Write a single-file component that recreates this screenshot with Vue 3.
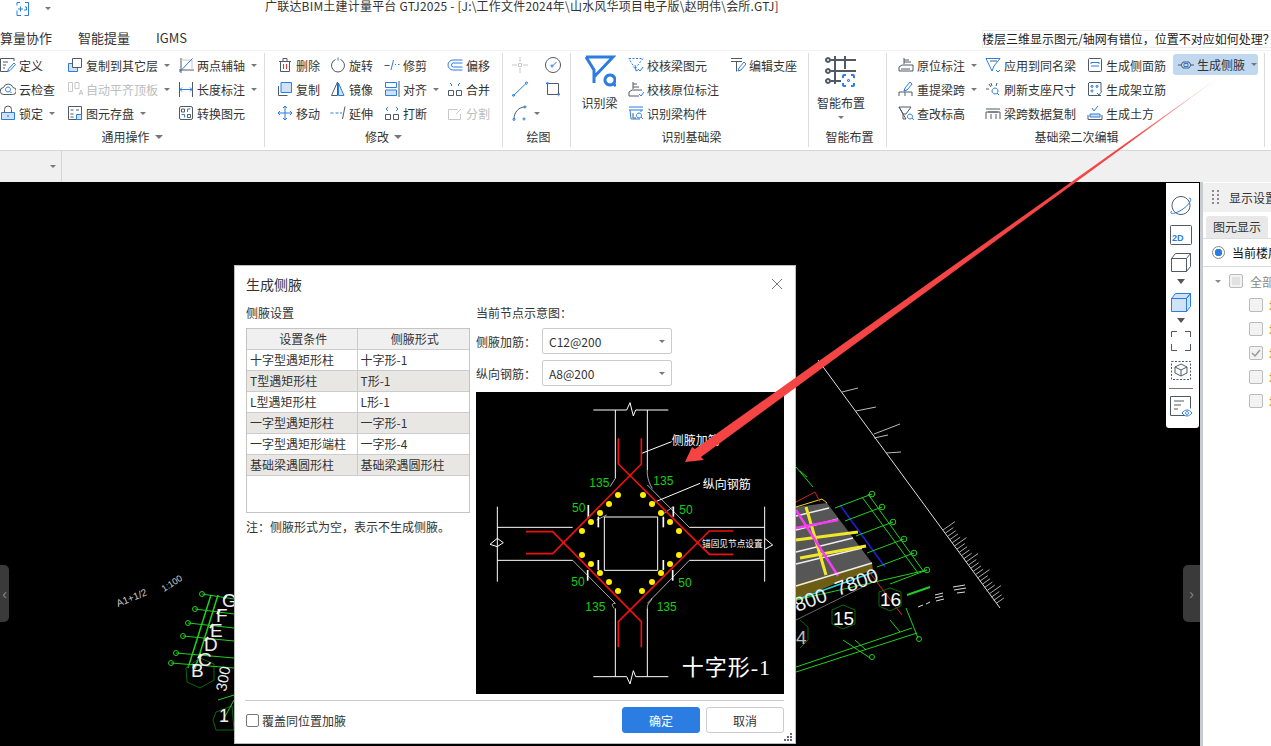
<script setup>
import { h } from 'vue'

// stroke/fill per short key used in the icon table
const STYLES = {
  k: { stroke: '#505a66', fill: 'none' },
  b: { stroke: '#2b7de1', fill: 'none' },
  l: { stroke: '#2b7de1', fill: '#cfe2f8' },
  w: { stroke: '#505a66', fill: '#fff' },
  g: { stroke: '#c8c8c8', fill: 'none' },
  r: { stroke: '#e03030', fill: 'none' },
  B: { stroke: '#2b7de1', fill: 'none', 'stroke-width': 3 },
  E: { stroke: '#2b7de1', fill: 'none', 'stroke-width': 2 },
  D: { stroke: '#505a66', fill: 'none', 'stroke-width': 2 },
  d: { stroke: '#505a66', fill: 'none', 'stroke-dasharray': '2 1.5' },
  e: { stroke: '#2b7de1', fill: 'none', 'stroke-dasharray': '2 1.5' },
}

const ICONS = {
  define: [['k', 'M14 4V1.500H.5v13H8'], ['k', 'M3 5h5M3 8h3M3 11h2'], ['b', 'M14 6 8.500 12l-1 2.500 2.500-1L15.500 7.500z']],
  cloud: [['k', 'M4 13.500a3.500 3.500 0 0 1-.5-7 5 5 0 0 1 9.500 0 3.500 3.500 0 0 1-.5 7z'], ['b', 'M8 6a2.500 2.500 0 1 0 .01 0M10 10.500l1.500 1.500']],
  lock: [['l', 'M1.500 7.500h13v7h-13z'], ['k', 'M4.500 7.500V4.500a3.500 3.500 0 0 1 7 0v3M8 10v2']],
  copyLayer: [['l', 'M1.500 6.500h9v8h-9z'], ['w', 'M5.500 1.500h9v9h-9z']],
  alignTop: [['g', 'M1.500 1.500h4v9h-4zM8 1.500h4v6H8zM12 14l2-5 2 5M13 12.500h2']],
  save: [['k', 'M1.500 1.500h13v13h-13zM3.500 5h3M9 5h3M3.500 9h3M3.500 12h3'], ['l', 'M9.500 9.500h5v5h-5z']],
  twoPoint: [['k', 'M3 1v15M1 13h15'], ['g', 'M3 3h11v10'], ['b', 'M1.500 15 14.500 1.500']],
  length: [['k', 'M1.500 1v15M14.500 1v15'], ['b', 'M2 8.500h12M4 6.500l-2 2 2 2M12 6.500l2 2-2 2']],
  convert: [['k', 'M1.500 3a1.500 1.500 0 0 1 1.500-1.500h10a1.500 1.500 0 0 1 1.500 1.500v10a1.500 1.500 0 0 1-1.500 1.500H3a1.500 1.500 0 0 1-1.500-1.500zM3.500 4h3v3h-3zM9.500 9.500h3v3h-3z'], ['b', 'M9.500 7V4h3M3.500 9.500h3v3']],
  trash: [['k', 'M3.500 4.500v10h9v-10zM2 4.500h12M6 4.500V1.500h4v3'], ['r', 'M6.500 7v5M9.500 7v5']],
  rotate: [['k', 'M5.500 2.500a6.500 6.500 0 1 0 5 0'], ['b', 'M8 .5v3']],
  trim: [['k', 'M.5 8.500h5'], ['b', 'M11 7.500h1M14 7.500h1.500M9.500 3 7 13']],
  offset: [['b', 'M15.500 3H6a5 5 0 0 0 0 10h9.500M15.500 6H6.500a2 2 0 0 0 0 4h9']],
  copy: [['k', 'M1.500 5v9.500h9'], ['l', 'M4 1.500h10.500v10H4z']],
  mirror: [['k', 'M7.500 1 1.500 14.500h6z'], ['l', 'M8.500 2l5.500 12.500H8.500z']],
  align: [['b', 'M1.500 1.500h11v5h-11z'], ['l', 'M1.500 9h11v5.500h-11z'], ['k', 'M15 0v16']],
  merge: [['k', 'M1.500 9.500h5v5h-5zM9.500 9.500h5v5h-5z'], ['b', 'M3 2l2 2-1 1M13 2l-2 2 1 1']],
  move: [['b', 'M8 1v14M1 8h14M6 3l2-2 2 2M6 13l2 2 2-2M3 6 1 8l2 2M13 6l2 2-2 2']],
  extend: [['b', 'M.5 8h3M5.500 8h3M10 8h2'], ['k', 'M15 1.500 12.500 14']],
  breakIcon: [['k', 'M1.500 9.500h5v5h-5zM9.500 9.500h5v5h-5z'], ['b', 'M4 2 2 4l2 2M12 2l2 2-2 2']],
  split: [['g', 'M1.500 4.500h9M1.500 4.500v10h12V9M9 9l5-5']],
  point: [['g', 'M0 8h5M11 8h5M8 0v5M8 11v5M6.500 6.500h3v3h-3z']],
  gauge: [['k', 'M8 .5a7.500 7.500 0 1 0 .01 0'], ['b', 'M8 8.500l3.500-3.500M7 8a1 1 0 1 0 .01 0']],
  line: [['b', 'M1.500 14.500 14.500 2M1.500 13.500a1 1 0 1 0 .01 0M14.500 1a1 1 0 1 0 .01 0']],
  rect: [['k', 'M2.500 2.500h11v11h-11z'], ['b', 'M2.500 1.500a1 1 0 1 0 .01 0M13.500 12.500a1 1 0 1 0 .01 0']],
  arc: [['k', 'M2 14C2 7 7 2 13 2'], ['b', 'M2 13.500a1 1 0 1 0 .01 0M13 1a1 1 0 1 0 .01 0M12 13a1 1 0 1 0 .01 0']],
  checkBeam: [['e', 'M1 1.500h14L7 12 1 1.500z'], ['b', 'M7 8l1 6 2-1M10 12l2 2 3-4']],
  checkNote: [['k', 'M5 8V1M5 3h4M5 6h6M1 15V11l3-2h10M1 15h10'], ['b', 'M11 13l2 2 3-4']],
  beamPart: [['b', 'M1 2h14M1 5h14M2 5l1 9h9M13 5v2'], ['k', 'M5 8v5h3'], ['b', 'M11 8a2.500 2.500 0 1 0 .01 0M13 12l2 2']],
  editSeat: [['k', 'M1 1.500h11M1 4.500h11M6.500 4.500v10'], ['b', 'M14 5 9 11l-1 3 3-1 5-6z']],
  origin: [['k', 'M6 7V1M6 3h5M6 5h7'], ['w', 'M1 14V10l3-2h11v6z'], ['k', 'M3 12h9']],
  reBeam: [['b', 'M12 1 7 7l-1 3 3-1 5-6z'], ['k', 'M1 11h13M1 15v-4M7 15v-4M14 15v-4']],
  queryElev: [['k', 'M1 2h12l-5 7H5v5h3zM1 2l4 7'], ['b', 'M12 9a2.500 2.500 0 1 0 .01 0M14 13l2 2']],
  applySame: [['b', 'M1 1.500h14L9 9 7 14 1 1.500z'], ['k', 'M5 4h7'], ['b', 'M11 13l2 2 2-2']],
  refresh: [['k', 'M1 8h3M6 2l1 3M12 2l-1 3M4 3l2 3'], ['b', 'M10 7a3 3 0 1 0 .01 0M12 12l2 2']],
  spanCopy: [['k', 'M1 4h14M3 7h10M1 14V7h14v7M6 14V9M11 14V9']],
  sideBar: [['k', 'M2.500 1.500h11a1 1 0 0 1 1 1v11a1 1 0 0 1-1 1h-11a1 1 0 0 1-1-1v-11a1 1 0 0 1 1-1z'], ['b', 'M4 7V5.500h8V7M4 9h8']],
  frameBar: [['k', 'M2 1.500h12v9M14 14.500H2a.5.5 0 0 1-.5-.5V2'], ['b', 'M5 4.500a1 1 0 1 0 .01 0M10 4.500a1 1 0 1 0 .01 0M5 9a1 1 0 1 0 .01 0M10 12l2 2 3-4']],
  earth: [['b', 'M5 3l2 3 4-5'], ['k', 'M1 10v4.500h14V10'], ['l', 'M3 9h10v3H3z']],
  haunch: [['k', 'M0 8h3M13 8h3M3 8l2-3h6l2 3-2 3H5z'], ['b', 'M6 6.500h4v3H6z']],
  filter: [['B', 'M2 2h27L10 22M2 2l8 13v13'], ['B', 'M26 20a5 5 0 1 0 .01 0M29 28l3 3']],
  smart: [
    ['D', 'M6 5h25M6 16h25M6 26h10M10 1v28M20 1v13'],
    ['D', 'M3 3a2 2 0 1 0 .01 0M3 14a2 2 0 1 0 .01 0M3 24a2 2 0 1 0 .01 0'],
    ['E', 'M18 23v-2a1 1 0 0 1 1-1h2M26 20h2a1 1 0 0 1 1 1v2M29 28v2a1 1 0 0 1-1 1h-2M21 31h-2a1 1 0 0 1-1-1v-2'],
    ['E', 'M23.500 25a.5.5 0 1 0 .01 0'],
  ],
  quick: [['b', 'M5 1.500H2v3M10 1.500h3.500v13h-4M2 9.500v5h4M8 8H3M5.500 5.500v5M10 6h1.500v3H9']],
  sphere: [['k', 'M12 2.500a9 9 0 1 0 .01 0'], ['b', 'M3 17C-1 21 7 20 14 15s10-11 6-11']],
  flat: [['k', 'M2.500 1.500h19a1 1 0 0 1 1 1v17a1 1 0 0 1-1 1h-19a1 1 0 0 1-1-1v-17a1 1 0 0 1 1-1z']],
  cube: [['k', 'M2.500 7.500h15v13h-15zM2.500 7.500l4-5h15l-4 5M17.500 20.500l4-5v-13']],
  cubeOn: [['l', 'M2.500 7.500h15v13h-15zM2.500 7.500l4-5h15l-4 5zM17.500 20.500l4-5v-13l-4 5z']],
  corners: [['k', 'M2.500 7V1.500H8M16 1.500h5.500V7M21.500 14v6.500H16M8 20.500H2.500V14']],
  dashCube: [['d', 'M2.500 1.500h19v18h-19z'], ['k', 'M12 4l6 3v6l-6 3-6-3V7zM6 7l6 3 6-3M12 10v6']],
  docEye: [['k', 'M16 20.500H1.500V1.500h20v12M5 6h10M5 10h7M5 14h4'], ['b', 'M13 18c3-4 7-4 10 0-3 4-7 4-10 0zM18 16.500a1.500 1.500 0 1 0 .01 0']],
}

// functional icon: draws the named entry on a square grid of `size`
const Ico = (props) =>
  h(
    'svg',
    { width: props.size || 16, height: props.size || 16, viewBox: `0 0 ${props.size || 16} ${props.size || 16}`, style: 'flex:none;display:block' },
    ICONS[props.name].map(([s, d]) => h('path', { d, ...STYLES[s] })),
  )
Ico.props = ['name', 'size']

const GROUPS = [
  {
    label: '通用操作', w: 265, more: true, nudge: 0, indent: 0,
    cols: [
      { w: 67, items: [{ i: 'define', t: '定义' }, { i: 'cloud', t: '云检查' }, { i: 'lock', t: '锁定', c: 1 }] },
      { w: 111, items: [{ i: 'copyLayer', t: '复制到其它层', c: 1 }, { i: 'alignTop', t: '自动平齐顶板', c: 1, off: 1 }, { i: 'save', t: '图元存盘', c: 1 }] },
      { w: 86, items: [{ i: 'twoPoint', t: '两点辅轴', c: 1 }, { i: 'length', t: '长度标注', c: 1 }, { i: 'convert', t: '转换图元' }] },
    ],
  },
  {
    label: '修改', w: 238, more: true, nudge: 0, indent: 12,
    cols: [
      { w: 53, items: [{ i: 'trash', t: '删除' }, { i: 'copy', t: '复制' }, { i: 'move', t: '移动' }] },
      { w: 54, items: [{ i: 'rotate', t: '旋转' }, { i: 'mirror', t: '镜像' }, { i: 'extend', t: '延伸' }] },
      { w: 63, items: [{ i: 'trim', t: '修剪' }, { i: 'align', t: '对齐', c: 1 }, { i: 'breakIcon', t: '打断' }] },
      { w: 55, items: [{ i: 'offset', t: '偏移' }, { i: 'merge', t: '合并' }, { i: 'split', t: '分割', off: 1 }] },
    ],
  },
  {
    label: '绘图', w: 68, nudge: 4, indent: 9,
    cols: [
      { w: 33, items: [{ i: 'point' }, { i: 'line' }, { i: 'arc', c: 1 }] },
      { w: 24, items: [{ i: 'gauge' }, { i: 'rect' }] },
    ],
  },
  {
    label: '识别基础梁', w: 238, nudge: 4, indent: 0, big: { i: 'filter', t: '识别梁', w: 57 },
    cols: [
      { w: 102, items: [{ i: 'checkBeam', t: '校核梁图元' }, { i: 'checkNote', t: '校核原位标注' }, { i: 'beamPart', t: '识别梁构件' }] },
      { w: 78, items: [{ i: 'editSeat', t: '编辑支座' }] },
    ],
  },
  { label: '智能布置', w: 78, nudge: 4, indent: 0, big: { i: 'smart', t: '智能布置', w: 64, c: 1 }, cols: [] },
  {
    label: '基础梁二次编辑', w: 378, nudge: 2, indent: 11,
    cols: [
      { w: 87, items: [{ i: 'origin', t: '原位标注', c: 1 }, { i: 'reBeam', t: '重提梁跨', c: 1 }, { i: 'queryElev', t: '查改标高' }] },
      { w: 102, items: [{ i: 'applySame', t: '应用到同名梁' }, { i: 'refresh', t: '刷新支座尺寸' }, { i: 'spanCopy', t: '梁跨数据复制' }] },
      { w: 86, items: [{ i: 'sideBar', t: '生成侧面筋' }, { i: 'frameBar', t: '生成架立筋' }, { i: 'earth', t: '生成土方' }] },
      { w: 85, items: [{ i: 'haunch', t: '生成侧腋', c: 1, on: 1 }] },
    ],
  },
]

const FLOAT_TOOLS = [
  { i: 'sphere', mb: 8 },
  { i: 'flat', mb: 5, tag: '2D' },
  { i: 'cube', mb: 6 },
  { caret: true, mb: 7 },
  { i: 'cubeOn', mb: 5 },
  { caret: true, mb: 7 },
  { i: 'corners', mb: 8 },
  { i: 'dashCube', mb: 6 },
  { rule: true, mb: 6 },
  { i: 'docEye', mb: 0 },
]

const ROWS = [
  ['十字型遇矩形柱', '十字形-1'],
  ['T型遇矩形柱', 'T形-1'],
  ['L型遇矩形柱', 'L形-1'],
  ['一字型遇矩形柱', '一字形-1'],
  ['一字型遇矩形端柱', '一字形-4'],
  ['基础梁遇圆形柱', '基础梁遇圆形柱'],
]

const DOTS = [
  [444, 315], [417, 342], [390, 369], [363, 396], [336, 423],
  [519, 315], [546, 342], [573, 369], [600, 396], [627, 423],
  [336, 495], [363, 522], [390, 549], [417, 576], [444, 603],
  [627, 495], [600, 522], [573, 549], [546, 576], [516, 603],
]
const LABELS = [
  ['135', 358, 290], ['135', 550, 286], ['135', 346, 662], ['135', 560, 662],
  ['50', 306, 365], ['50', 628, 371], ['50', 304, 587], ['50', 625, 590],
]
const TICKS = [
  [355, 345, 355, 385], [610, 350, 610, 380], [353, 540, 353, 572], [608, 540, 608, 572],
  [385, 380, 385, 412], [580, 380, 580, 412], [385, 510, 385, 540], [580, 510, 580, 540],
]
const RED_BARS = [
  '445,145 445,222 718,493 790,493',
  '514,145 514,222 248,491 168,491',
  '168,425 248,425 514,695 514,772',
  '790,423 718,423 445,695 445,772',
]

// model drawn behind the dialog (page coordinates)
const AXIS_HEADS = [[872, 494], [882, 507], [893, 522], [904, 539], [914, 553], [927, 570]]
const LEFT_HEADS = [[202, 594], [195, 609], [188, 623], [183, 636], [176, 653], [171, 663]]
const LEFT_LETTERS = [['G', 222, 607], ['F', 216, 622], ['E', 210, 637], ['D', 204, 651], ['C', 198, 666], ['B', 191, 677]]
const LONG_TICKS = [
  [842, 392, 858, 388], [856, 411, 876, 407], [874, 434, 900, 424], [874, 438, 888, 435], [886, 453, 901, 452],
]
// dense comb at the far end of the long axis line
const COMB = Array.from({ length: 24 }, (_, i) => {
  const x = 943 + i * 2.300
  const y = 530 + i * 3.200
  const len = i % 5 === 0 ? 12 : 8
  return [x, y, x + len, y - len * 0.700]
})
</script>

<template>
  <div class="page">
    <header class="titlebar">
      <Ico class="quick" name="quick" />
      <span class="mini-caret quick-caret"></span>
      <span class="title">广联达BIM土建计量平台 GTJ2025 - [J:\工作文件2024年\山水风华项目电子版\赵明伟\会所.GTJ]</span>
    </header>

    <nav class="tabs">
      <span class="tab">算量协作</span>
      <span class="tab">智能提量</span>
      <span class="tab">IGMS</span>
      <div class="notice">楼层三维显示图元/轴网有错位，位置不对应如何处理？</div>
    </nav>

    <section class="ribbon">
      <div
        v-for="g in GROUPS"
        :key="g.label"
        class="group"
        :style="{ width: g.w + 'px' }"
      >
        <div class="group-body" :style="{ paddingLeft: g.indent + 'px' }">
          <div v-if="g.big" class="big" :style="{ width: g.big.w + 'px' }">
            <Ico :name="g.big.i" :size="32" />
            <span class="big-text">{{ g.big.t }}</span>
            <span v-if="g.big.c" class="mini-caret"></span>
          </div>
          <div v-for="(col, ci) in g.cols" :key="ci" class="col" :style="{ width: col.w + 'px' }">
            <div
              v-for="(item, ii) in col.items"
              :key="ii"
              class="item"
              :class="{ 'item--off': item.off, 'item--on': item.on }"
            >
              <Ico :name="item.i" />
              <span v-if="item.t">{{ item.t }}</span>
              <span v-if="item.c" class="mini-caret"></span>
            </div>
          </div>
        </div>
        <div class="group-label" :style="{ paddingLeft: g.nudge + 'px' }">
          <span>{{ g.label }}</span>
          <span v-if="g.more" class="label-caret"></span>
        </div>
      </div>
    </section>

    <div class="subbar">
      <div class="combo"><span class="mini-caret"></span></div>
    </div>

    <main class="stage">
      <div class="canvas">
        <svg class="model" width="1200" height="564" viewBox="0 182 1200 564">
          <!-- left block -->
          <g fill="none" font-family="'Liberation Sans', sans-serif">
            <text x="118" y="607" fill="#ccc" font-size="10" transform="rotate(-22 118 607)">A1+1/2</text>
            <text x="164" y="592" fill="#ccc" font-size="9" transform="rotate(-33 164 592)">1:100</text>
            <path d="M211 595 188 668M218 595 195 669" stroke="#1fd01f" stroke-width="1.500" />
            <polygon points="186,668 200,658 214,664 214,680 200,688 187,682" stroke="#0b6a0b" />
            <polygon points="216,712 232,706 234,730 216,730 213,720" stroke="#0b6a0b" />
            <path d="M218 700 234 695M222 722 234 700" stroke="#1fd01f" />
            <template v-for="(p, i) in LEFT_HEADS" :key="'lh' + i">
              <circle :cx="p[0]" :cy="p[1]" r="2.500" stroke="#1fd01f" />
              <line :x1="p[0]" :y1="p[1]" :x2="234" :y2="p[1] + 5" stroke="#1fd01f" />
              <line :x1="p[0] + 22" :y1="p[1] + 5" :x2="p[0] + 25" :y2="p[1] + 1" stroke="#fff" stroke-width="2" />
            </template>
            <text
              v-for="l in LEFT_LETTERS"
              :key="l[0]"
              :x="l[1]"
              :y="l[2]"
              fill="#eee"
              font-size="19"
            >{{ l[0] }}</text>
            <text x="226" y="692" fill="#eee" font-size="15" transform="rotate(-80 226 692)">300</text>
            <text x="219" y="722" fill="#eee" font-size="18">1</text>
          </g>

          <!-- right block -->
          <g fill="none" font-family="'Liberation Sans', sans-serif">
            <line x1="818" y1="360" x2="1000" y2="608" stroke="#ddd" />
            <line
              v-for="(t, i) in LONG_TICKS"
              :key="'lt' + i"
              :x1="t[0]"
              :y1="t[1]"
              :x2="t[2]"
              :y2="t[3]"
              stroke="#bbb"
            />
            <line
              v-for="(t, i) in COMB"
              :key="'comb' + i"
              :x1="t[0]"
              :y1="t[1]"
              :x2="t[2]"
              :y2="t[3]"
              stroke="#aaa"
            />
            <polygon points="796,507 827,503 872,563 796,590" fill="#565656" />
            <polygon points="796,584 872,563 873,570 837,583 796,600" fill="#6b5d14" />
            <path d="M796 516 829 508M796 530 838 519M796 552 853 538M796 564 862 548" stroke="#eee" stroke-width="1.500" />
            <path d="M806 507 826 575M796 540 858 532M800 558 866 546" stroke="#f0e62a" stroke-width="3" />
            <path d="M796 528 838 520M796 510 838 576" stroke="#f53df0" stroke-width="2.500" />
            <path d="M796 586 872 563" stroke="#eee" stroke-width="1.500" />
            <path d="M796 507 822 499 827 503" stroke="#e8d820" />
            <path d="M840 505 885 567" stroke="#2020e0" stroke-width="1.500" />
            <path d="M796 502 815 492 820 502" stroke="#d02020" />
            <path d="M796 467 813 487M800 471 807 477" stroke="#1fd01f" />
            <path d="M796 600 874 572" stroke="#25d5e5" stroke-width="1.500" />
            <path d="M796 620 877 580" stroke="#666" />
            <path d="M870 573 902 615" stroke="#e02020" />
            <template v-for="(p, i) in AXIS_HEADS" :key="'ah' + i">
              <circle :cx="p[0]" :cy="p[1]" r="2.800" stroke="#1fd01f" />
              <line :x1="p[0]" :y1="p[1]" :x2="p[0] - 37" :y2="p[1] + 14" stroke="#1fd01f" />
            </template>
            <path d="M862 497 918 573M868 494 924 572M796 600 927 570" stroke="#1fd01f" />
            <path d="M796 667 912 628M796 672 917 633M906 608 918 638M843 640 870 658M855 640 866 650M890 620 900 632" stroke="#1fd01f" />
            <circle cx="919" cy="639" r="2.500" stroke="#1fd01f" />
            <circle cx="872" cy="657" r="2.500" stroke="#1fd01f" />
            <path d="M907 595 930 587" stroke="#1fd01f" stroke-width="2" />
            <polygon points="843,605 855,610 855,624 843,629 832,624 832,610" stroke="#0b6a0b" />
            <polygon points="890,588 901,592 901,606 890,611 879,606 879,592" stroke="#0b6a0b" />
            <path d="M800 620 808 627 808 640 800 648" stroke="#0b6a0b" />
            <text x="838" y="596" fill="#eee" font-size="20" transform="rotate(-20 838 596)">7800</text>
            <text x="797" y="612" fill="#eee" font-size="20" transform="rotate(-20 797 612)">800</text>
            <text x="833" y="625" fill="#fff" font-size="19">15</text>
            <text x="880" y="606" fill="#fff" font-size="19">16</text>
            <text x="796" y="644" fill="#bbb" font-size="19">4</text>
            <path d="M935 595 943 593M935 598 943 596M936 601 944 599M918 607l5-2M926 604l4-2M953 587l12-2M954 590l12-2M957 593l8-1" stroke="#ddd" />
          </g>
        </svg>

        <div class="handle handle--left">‹</div>
        <div class="handle handle--right">›</div>

        <!-- floating view toolbar -->
        <div class="float-tools">
          <template v-for="(t, i) in FLOAT_TOOLS" :key="i">
            <div v-if="t.rule" class="float-rule" :style="{ marginBottom: t.mb + 'px' }"></div>
            <span v-else-if="t.caret" class="float-caret" :style="{ marginBottom: t.mb + 'px' }"></span>
            <div v-else class="float-icon" :style="{ marginBottom: t.mb + 'px' }">
              <Ico :name="t.i" :size="24" />
              <span v-if="t.tag" class="float-tag">{{ t.tag }}</span>
            </div>
          </template>
        </div>

        <!-- 生成侧腋 dialog -->
        <div class="dialog">
          <div class="dialog-title">
            <span>生成侧腋</span>
            <svg class="close" width="12" height="12" viewBox="0 0 12 12">
              <path d="M1 1l10 10M11 1 1 11" stroke="#777" fill="none" />
            </svg>
          </div>

          <div class="dialog-body">
            <div class="left">
              <div class="section-label">侧腋设置</div>
              <div class="table-box">
                <table>
                  <thead>
                    <tr>
                      <th>设置条件</th>
                      <th>侧腋形式</th>
                    </tr>
                  </thead>
                  <tbody>
                    <tr v-for="(r, i) in ROWS" :key="i">
                      <td>{{ r[0] }}</td>
                      <td>{{ r[1] }}</td>
                    </tr>
                  </tbody>
                </table>
              </div>
              <p class="note">注：侧腋形式为空，表示不生成侧腋。</p>
            </div>

            <div class="right">
              <div class="section-label">当前节点示意图：</div>
              <div class="field">
                <span class="field-label">侧腋加筋：</span>
                <div class="select">C12@200<span class="mini-caret select-caret"></span></div>
              </div>
              <div class="field">
                <span class="field-label">纵向钢筋：</span>
                <div class="select">A8@200<span class="mini-caret select-caret"></span></div>
              </div>
              <svg class="node" width="308" height="302" viewBox="18 6 924 906">
                <g fill="none" stroke="#fff" stroke-width="3">
                  <path d="M370 60H470L480 38 490 78 497 60H595M436 60V265M532 60V240" />
                  <path d="M370 860H470L480 882 490 842 497 860H595M436 655V860M532 655V860" />
                  <path d="M82 350V575M82 412H308M82 511H308M82 445 60 463 82 470 100 458 82 445" />
                  <path d="M884 350V575M658 412H884M658 511H884M884 445 908 465 884 478" />
                  <path d="M403 381H563V541H403Z" />
                  <path d="M532 285 658 412M436 265 420 290M308 511 436 640M658 511 532 640M380 390 410 375M575 375 610 350" stroke-width="2" />
                  <path d="M515 190 605 155M545 340 690 280" />
                  <path d="M532 240C530 262 540 285 547 295M436 640C420 640 430 650 432 655M532 655C530 640 545 635 545 625" stroke-width="2" />
                </g>
                <line
                  v-for="(t, i) in TICKS"
                  :key="'tick' + i"
                  :x1="t[0]"
                  :y1="t[1]"
                  :x2="t[2]"
                  :y2="t[3]"
                  stroke="#fff"
                  stroke-width="5"
                />
                <polyline
                  v-for="(p, i) in RED_BARS"
                  :key="'bar' + i"
                  :points="p"
                  fill="none"
                  stroke="#ef1111"
                  stroke-width="5"
                />
                <circle v-for="(d, i) in DOTS" :key="'dot' + i" :cx="d[0]" :cy="d[1]" r="9" fill="#ffef00" />
                <text
                  v-for="(l, i) in LABELS"
                  :key="'lab' + i"
                  :x="l[1]"
                  :y="l[2]"
                  fill="#11d011"
                  font-size="36"
                  font-family="'Liberation Sans', sans-serif"
                >{{ l[0] }}</text>
                <text x="605" y="165" fill="#fff" font-size="36" class="cad-text">侧腋加筋</text>
                <text x="698" y="296" fill="#fff" font-size="36" class="cad-text">纵向钢筋</text>
                <text x="696" y="472" fill="#fff" font-size="26" class="cad-text">锚固见节点设置</text>
                <text x="635" y="855" fill="#fff" font-size="66" letter-spacing="3" font-family="'Liberation Serif', 'Noto Sans CJK SC', serif">十字形-1</text>
              </svg>
            </div>
          </div>

          <div class="dialog-foot">
            <label class="cover">
              <span class="box"></span>
              覆盖同位置加腋
            </label>
            <div class="actions">
              <button class="btn btn--primary">确定</button>
              <button class="btn">取消</button>
            </div>
            <svg class="grip" width="8" height="8" viewBox="0 0 8 8">
              <path d="M6 0h2v2H6zM3 3h2v2H3zM6 3h2v2H6zM0 6h2v2H0zM3 6h2v2H3zM6 6h2v2H6z" fill="#667" />
            </svg>
          </div>
        </div>
      </div>

      <aside class="panel">
        <div class="panel-head">
          <svg class="panel-grip" width="7" height="15" viewBox="0 0 7 15">
            <path d="M0 0h2v2H0zM5 0h2v2H5zM0 4h2v2H0zM5 4h2v2H5zM0 8h2v2H0zM5 8h2v2H5zM0 12h2v2H0zM5 12h2v2H5z" fill="#8b8b8b" />
          </svg>
          <span>显示设置</span>
        </div>
        <div class="panel-tabs"><span class="panel-tab">图元显示</span></div>
        <div class="panel-scope">
          <span class="radio"></span>
          <span>当前楼层</span>
        </div>
        <div class="tree">
          <div class="tree-all">
            <span class="mini-caret"></span>
            <span class="check check--mixed"></span>
            <span class="tree-text">全部</span>
          </div>
          <div v-for="n in 5" :key="n" class="tree-row">
            <span class="check">
              <svg v-if="n === 3" width="12" height="12" viewBox="0 0 12 12">
                <path d="M2 6l3 3 5-6" fill="none" stroke="#9a9a9a" stroke-width="1.500" />
              </svg>
            </span>
            <span class="tree-stub">墙</span>
          </div>
        </div>
      </aside>
    </main>

    <!-- annotation arrow laid over the screenshot -->
    <svg class="arrow" width="1271" height="746" viewBox="0 0 1271 746">
      <defs>
        <linearGradient id="fade" gradientUnits="userSpaceOnUse" x1="1222" y1="75" x2="1130" y2="141">
          <stop offset="0" stop-color="#ffe4e4" />
          <stop offset="1" stop-color="#f44444" />
        </linearGradient>
      </defs>
      <polygon points="1222,75 701,457 704,460 685,462 692,447 695,449" fill="url(#fade)" />
    </svg>
  </div>
</template>

<style>
html,
body {
  margin: 0;
  overflow: hidden;
}
</style>

<style scoped>
.page {
  position: relative;
  width: 1271px;
  height: 746px;
  overflow: hidden;
  display: flex;
  flex-direction: column;
  background: #fff;
  color: #333;
  font-family: "Noto Sans CJK SC", "Liberation Sans", sans-serif;
  font-size: 12px;
}

.titlebar {
  height: 25px;
  flex: none;
  display: flex;
  align-items: flex-start;
  padding-left: 15px;
}

.quick {
  margin-top: 1px;
}

.titlebar .quick-caret {
  margin: 7px 0 0 14px;
}

.title {
  margin-left: 214px;
  line-height: 12px;
  letter-spacing: 0.2px;
  white-space: nowrap;
}

.tabs {
  height: 25px;
  flex: none;
  display: flex;
  align-items: center;
  gap: 26px;
  font-size: 13px;
}

.tab {
  line-height: 25px;
}

.notice {
  margin-left: auto;
  width: 288px;
  height: 16px;
  margin-top: 3px;
  overflow: hidden;
  font-size: 12px;
  line-height: 16px;
  white-space: nowrap;
  text-indent: -1px;
  outline: 1px solid #eee;
  background: #fff;
  color: #222;
}

.ribbon {
  flex: none;
  display: flex;
  padding-top: 2px;
  box-sizing: border-box;
  border-top: 1px solid #f2f2f2;
  border-bottom: 1px solid #d6d6d6;
  height: 101px;
}

.group {
  height: 94px;
  box-sizing: border-box;
  flex: none;
  border-right: 1px solid #dcdcdc;
  display: flex;
  flex-direction: column;
}

.group-body {
  height: 72px;
  margin-bottom: 1px;
  flex: none;
  display: flex;
}

.col {
  flex: none;
}

.item {
  height: 24px;
  display: flex;
  align-items: center;
  gap: 3px;
  white-space: nowrap;
}

.item--off {
  color: #bdbdbd;
}

.item--on {
  background: #c1d8f1;
  border-radius: 3px;
  height: 21px;
  margin: 1px 0 2px;
  padding-left: 5px;
}

.mini-caret {
  display: inline-block;
  flex: none;
  width: 0;
  height: 0;
  margin-left: 3px;
  border-left: 3px solid transparent;
  border-right: 3px solid transparent;
  border-top: 3px solid #777;
}

.big {
  flex: none;
  display: flex;
  flex-direction: column;
  align-items: center;
  padding-top: 2px;
  box-sizing: border-box;
}

.big-text {
  margin-top: 7px;
  line-height: 17px;
  white-space: nowrap;
}

.big .mini-caret {
  margin: 5px 0 0;
}

.group-label {
  height: 22px;
  display: flex;
  align-items: center;
  justify-content: center;
  gap: 5px;
}

.label-caret {
  width: 0;
  height: 0;
  border-left: 4px solid transparent;
  border-right: 4px solid transparent;
  border-top: 4px solid #777;
}

.subbar {
  height: 31px;
  flex: none;
  background: #f0f0f0;
  display: flex;
}

.combo {
  width: 62px;
  border-right: 1px solid #d6d6d6;
  display: flex;
  align-items: center;
  justify-content: flex-end;
  padding-right: 5px;
  box-sizing: border-box;
}

.stage {
  flex: 1;
  min-height: 0;
  display: flex;
}

.canvas {
  position: relative;
  width: 1200px;
  flex: none;
  background: #000;
}

.model {
  position: absolute;
  left: 0;
  top: 0;
}

.handle {
  position: absolute;
  top: 383px;
  height: 57px;
  display: flex;
  align-items: center;
  justify-content: center;
  background: #3a3a3a;
  color: #888;
  font-size: 14px;
  font-family: "Liberation Sans", sans-serif;
}

.handle--left {
  left: 0;
  width: 9px;
  border-radius: 0 5px 5px 0;
}

.handle--right {
  left: 1183px;
  width: 17px;
  border-radius: 5px 0 0 5px;
}

.float-tools {
  position: absolute;
  left: 1166px;
  top: 1px;
  width: 33px;
  height: 245px;
  box-sizing: border-box;
  padding: 11px 3px 0 0;
  display: flex;
  flex-direction: column;
  align-items: center;
  background: #fff;
  border-radius: 0 0 3px 3px;
}

.float-icon {
  position: relative;
  height: 22px;
}

.float-tag {
  position: absolute;
  left: 3px;
  top: 9px;
  color: #2b7de1;
  font-size: 9px;
  font-weight: 700;
  font-family: "Liberation Sans", sans-serif;
}

.float-caret {
  width: 0;
  height: 0;
  border-left: 4px solid transparent;
  border-right: 4px solid transparent;
  border-top: 5px solid #555;
}

.float-rule {
  width: 24px;
  height: 1px;
  background: #777;
}

.dialog {
  position: absolute;
  left: 234px;
  top: 83px;
  width: 562px;
  height: 479px;
  box-sizing: border-box;
  background: #fff;
  border: 1px solid #bcbcbc;
  display: flex;
  flex-direction: column;
}

.dialog-title {
  height: 38px;
  flex: none;
  display: flex;
  align-items: center;
  justify-content: space-between;
  padding: 0 12px 3px 11px;
  box-sizing: border-box;
  font-size: 14px;
}

.dialog-body {
  flex: none;
  display: flex;
  padding-left: 11px;
  gap: 6px;
}

.section-label {
  height: 18px;
  line-height: 18px;
}

.left {
  width: 224px;
  flex: none;
}

.table-box {
  margin-top: 6px;
  width: 224px;
  height: 185px;
  box-sizing: border-box;
  border: 1px solid #c4c4c4;
}

table {
  width: 100%;
  border-collapse: collapse;
  table-layout: fixed;
}

th,
td {
  height: 21px;
  padding: 0 0 0 3px;
  box-sizing: border-box;
  font-weight: 400;
  text-align: left;
  border-right: 1px solid #ccc;
  border-bottom: 1px solid #ccc;
  white-space: nowrap;
  line-height: 20px;
}

th:first-child,
td:first-child {
  width: 110px;
}

th:last-child,
td:last-child {
  border-right: none;
}

th {
  height: 20px;
  background: #f0f0f0;
  text-align: center;
}

tbody tr:nth-child(even) td {
  background: #e8e7e4;
}

.note {
  margin: 5px 0 0;
  line-height: 18px;
}

.right {
  width: 308px;
  flex: none;
}

.field {
  display: flex;
  align-items: center;
  height: 26px;
  margin-top: 6px;
}

.field-label {
  width: 66px;
  flex: none;
}

.select {
  width: 130px;
  height: 26px;
  box-sizing: border-box;
  display: flex;
  align-items: center;
  justify-content: space-between;
  padding: 0 6px;
  border: 1px solid #ccc;
  border-radius: 2px;
}

.select-caret {
  margin: 0;
}

.node {
  display: block;
  margin-top: 6px;
  background: #000;
}

.cad-text {
  font-family: "Noto Sans CJK SC", sans-serif;
}

.dialog-foot {
  position: relative;
  margin: 6px 11px 0 10px;
  flex: 1;
  border-top: 1px solid #ccc;
  display: flex;
  align-items: flex-start;
  justify-content: space-between;
  padding-top: 6px;
}

.cover {
  display: flex;
  align-items: center;
  gap: 3px;
  height: 26px;
  padding-left: 1px;
}

.box {
  width: 13px;
  height: 13px;
  box-sizing: border-box;
  border: 1px solid #777;
  border-radius: 2px;
}

.actions {
  display: flex;
  gap: 6px;
}

.btn {
  width: 78px;
  height: 26px;
  padding: 0;
  box-sizing: border-box;
  border: 1px solid #ccc;
  border-radius: 3px;
  background: #fff;
  color: #333;
  font: inherit;
}

.btn--primary {
  border-color: #2b7de1;
  background: #2b7de1;
  color: #fff;
}

.grip {
  position: absolute;
  right: -8px;
  bottom: 2px;
}

.panel {
  width: 71px;
  flex: none;
  box-sizing: border-box;
  border-left: 3px solid #c8ccd0;
  background: #fff;
  overflow: hidden;
  white-space: nowrap;
}

.panel-head {
  height: 29px;
  margin-top: 1px;
  display: flex;
  align-items: center;
  gap: 10px;
  padding-left: 9px;
  background: #f0f0f0;
}

.panel-grip {
  flex: none;
}

.panel-tabs {
  height: 26px;
  display: flex;
  align-items: flex-end;
  padding-left: 3px;
  border-bottom: 1px solid #ddd;
}

.panel-tab {
  width: 62px;
  height: 22px;
  line-height: 22px;
  text-align: center;
  background: #e8e8e8;
  border-radius: 3px 3px 0 0;
}

.panel-scope {
  height: 28px;
  display: flex;
  align-items: center;
  gap: 7px;
  padding: 0 0 1px 9px;
  box-sizing: border-box;
  border-bottom: 1px solid #ddd;
  color: #111;
}

.radio {
  flex: none;
  width: 13px;
  height: 13px;
  box-sizing: border-box;
  border-radius: 50%;
  border: 1px solid #888;
  background: radial-gradient(circle, #2b7de1 0 3.500px, #fff 4px);
}

.tree {
  padding-top: 2px;
}

.tree-all {
  height: 24px;
  display: flex;
  align-items: center;
  padding-left: 12px;
  color: #888;
}

.tree-all .mini-caret {
  margin: 0 8px 0 0;
  border-top-color: #888;
}

.tree-text {
  margin-left: 7px;
}

.tree-row {
  height: 24px;
  display: flex;
  align-items: center;
  padding-left: 46px;
}

.check {
  flex: none;
  width: 14px;
  height: 14px;
  box-sizing: border-box;
  border: 1px solid #bbb;
  border-radius: 2px;
  background: #f2f2f2;
  display: flex;
}

.check--mixed {
  box-shadow: inset 0 0 0 2px #f2f2f2, inset 0 0 0 8px #e2e2e2;
}

.tree-stub {
  margin-left: 6px;
  color: #d08030;
}

.arrow {
  position: absolute;
  left: 0;
  top: 0;
  pointer-events: none;
}
</style>
